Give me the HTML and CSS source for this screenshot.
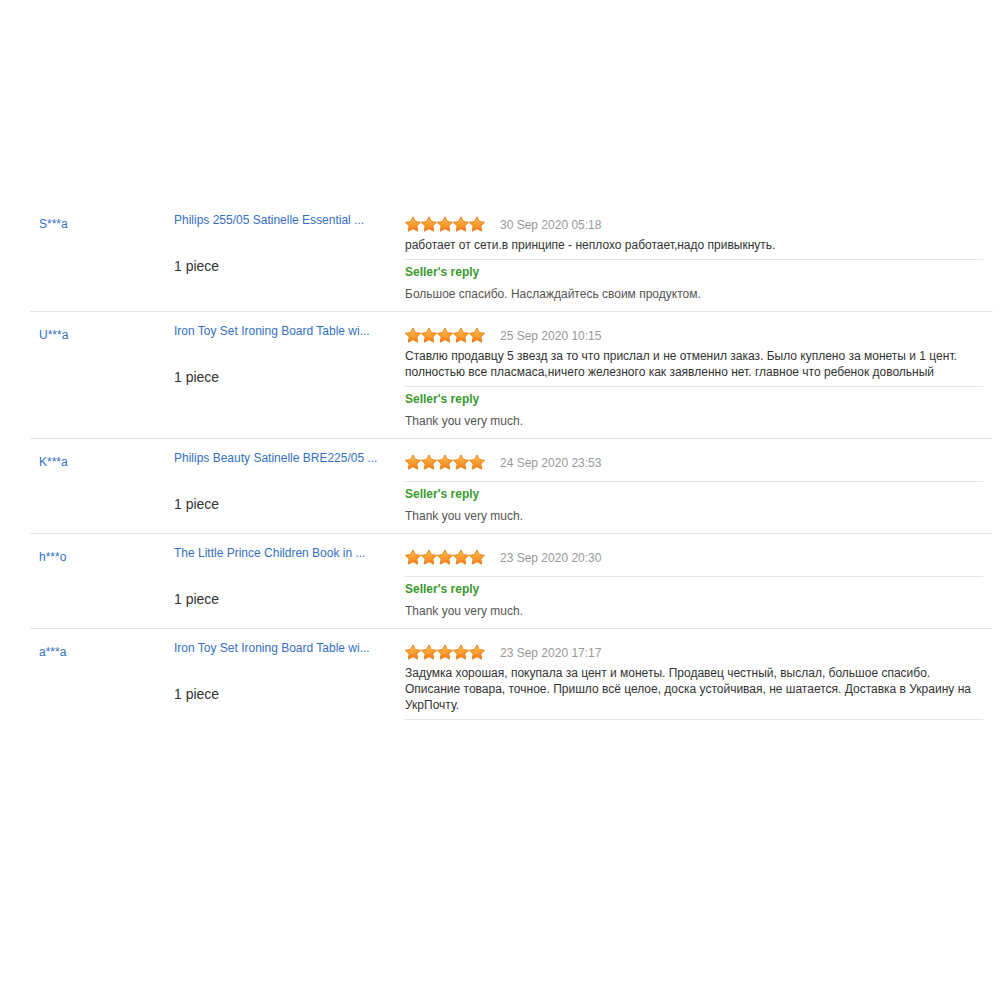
FILE: index.html
```html
<!DOCTYPE html>
<html lang="en">
<head>
  <meta charset="UTF-8">
  <link rel="stylesheet" href="styles.css">
  <title>Feedback</title>
</head>
<body>

  <svg class="defs" width="0" height="0">
    <defs>
      <linearGradient id="starfill" x1="0" y1="0" x2="0" y2="1">
        <stop offset="0" stop-color="#ffc24f"/>
        <stop offset="1" stop-color="#f37c12"/>
      </linearGradient>
      <symbol id="star" viewBox="0 0 16 16">
        <path d="M8 0.9 L10.4 5.6 L15.6 6.3 L11.8 9.9 L12.8 15.2 L8 12.7 L3.2 15.2 L4.2 9.9 L0.4 6.3 L5.6 5.6Z"
              fill="url(#starfill)" stroke="#eb8420" stroke-width="1" stroke-linejoin="round"/>
      </symbol>
    </defs>
  </svg>

  <div class="feedback">

    <div class="row">
      <div class="buyer">S***a</div>
      <div class="item">
        <a class="title" href="#">Philips 255/05 Satinelle Essential ...</a>
        <div class="qty">1 piece</div>
      </div>
      <div class="review">
        <div class="body">
          <div class="rate">
            <span class="stars">
              <svg><use href="#star"/></svg><svg><use href="#star"/></svg><svg><use href="#star"/></svg><svg><use href="#star"/></svg><svg><use href="#star"/></svg>
            </span>
            <span class="date">30 Sep 2020 05:18</span>
          </div>
          <p class="text">работает от сети.в принципе - неплохо работает,надо привыкнуть.</p>
        </div>
        <div class="reply">
          <div class="who">Seller's reply</div>
          <p class="answer">Большое спасибо. Наслаждайтесь своим продуктом.</p>
        </div>
      </div>
    </div>

    <div class="row">
      <div class="buyer">U***a</div>
      <div class="item">
        <a class="title" href="#">Iron Toy Set Ironing Board Table wi...</a>
        <div class="qty">1 piece</div>
      </div>
      <div class="review">
        <div class="body">
          <div class="rate">
            <span class="stars">
              <svg><use href="#star"/></svg><svg><use href="#star"/></svg><svg><use href="#star"/></svg><svg><use href="#star"/></svg><svg><use href="#star"/></svg>
            </span>
            <span class="date">25 Sep 2020 10:15</span>
          </div>
          <p class="text">Ставлю продавцу 5 звезд за то что прислал и не отменил заказ. Было куплено за монеты и 1 цент. полностью все пласмаса,ничего железного как заявленно нет. главное что ребенок довольный</p>
        </div>
        <div class="reply">
          <div class="who">Seller's reply</div>
          <p class="answer">Thank you very much.</p>
        </div>
      </div>
    </div>

    <div class="row">
      <div class="buyer">K***a</div>
      <div class="item">
        <a class="title" href="#">Philips Beauty Satinelle BRE225/05 ...</a>
        <div class="qty">1 piece</div>
      </div>
      <div class="review">
        <div class="body">
          <div class="rate">
            <span class="stars">
              <svg><use href="#star"/></svg><svg><use href="#star"/></svg><svg><use href="#star"/></svg><svg><use href="#star"/></svg><svg><use href="#star"/></svg>
            </span>
            <span class="date">24 Sep 2020 23:53</span>
          </div>
        </div>
        <div class="reply">
          <div class="who">Seller's reply</div>
          <p class="answer">Thank you very much.</p>
        </div>
      </div>
    </div>

    <div class="row">
      <div class="buyer">h***o</div>
      <div class="item">
        <a class="title" href="#">The Little Prince Children Book in ...</a>
        <div class="qty">1 piece</div>
      </div>
      <div class="review">
        <div class="body">
          <div class="rate">
            <span class="stars">
              <svg><use href="#star"/></svg><svg><use href="#star"/></svg><svg><use href="#star"/></svg><svg><use href="#star"/></svg><svg><use href="#star"/></svg>
            </span>
            <span class="date">23 Sep 2020 20:30</span>
          </div>
        </div>
        <div class="reply">
          <div class="who">Seller's reply</div>
          <p class="answer">Thank you very much.</p>
        </div>
      </div>
    </div>

    <div class="row">
      <div class="buyer">a***a</div>
      <div class="item">
        <a class="title" href="#">Iron Toy Set Ironing Board Table wi...</a>
        <div class="qty">1 piece</div>
      </div>
      <div class="review">
        <div class="body">
          <div class="rate">
            <span class="stars">
              <svg><use href="#star"/></svg><svg><use href="#star"/></svg><svg><use href="#star"/></svg><svg><use href="#star"/></svg><svg><use href="#star"/></svg>
            </span>
            <span class="date">23 Sep 2020 17:17</span>
          </div>
          <p class="text">Задумка хорошая, покупала за цент и монеты. Продавец честный, выслал, большое спасибо. Описание товара, точное. Пришло всё целое, доска устойчивая, не шатается. Доставка в Украину на УкрПочту.</p>
        </div>
      </div>
    </div>

  </div>

</body>
</html>
```

FILE: styles.css
```css
body {
    margin: 0;
    background: #fff;
    font-family: "Liberation Sans", Arial, sans-serif;
    font-size: 12px;
    color: #333;
}

svg.defs {
    position: absolute;
}

.feedback {
    margin: 201px 7px 0 30px;
}

.row {
    display: grid;
    grid-template-columns: 144px 231px 1fr;
    padding: 15px 0 9px 0;
    border-bottom: 1px solid #e5e5e5;
}

.row:last-child {
    border-bottom: none;
}

.buyer {
    padding-left: 9px;
    line-height: 16px;
    color: #3570c0;
}

.item {
    margin-top: -4px;
}

.item a.title {
    display: block;
    line-height: 16px;
    color: #3570c0;
    text-decoration: none;
    white-space: nowrap;
}

.qty {
    margin-top: 29px;
    font-size: 14px;
    line-height: 18px;
    color: #333;
}

.review {
    padding-right: 10px;
}

.body {
    padding-bottom: 6px;
    border-bottom: 1px solid #e5e5e5;
}

.rate {
    display: flex;
    align-items: center;
    height: 16px;
    margin-bottom: 5px;
}

.stars {
    display: flex;
    width: 80px;
}

.stars svg {
    width: 16px;
    height: 16px;
}

.date {
    margin-left: 15px;
    padding-top: 2px;
    color: #999;
}

p.text, p.answer {
    margin: 0;
    line-height: 16px;
}

p.text {
    color: #333;
}

.reply {
    padding-top: 4px;
}

.who {
    line-height: 16px;
    font-weight: bold;
    color: #3a9a2e;
}

p.answer {
    margin-top: 6px;
    color: #555;
}
```
